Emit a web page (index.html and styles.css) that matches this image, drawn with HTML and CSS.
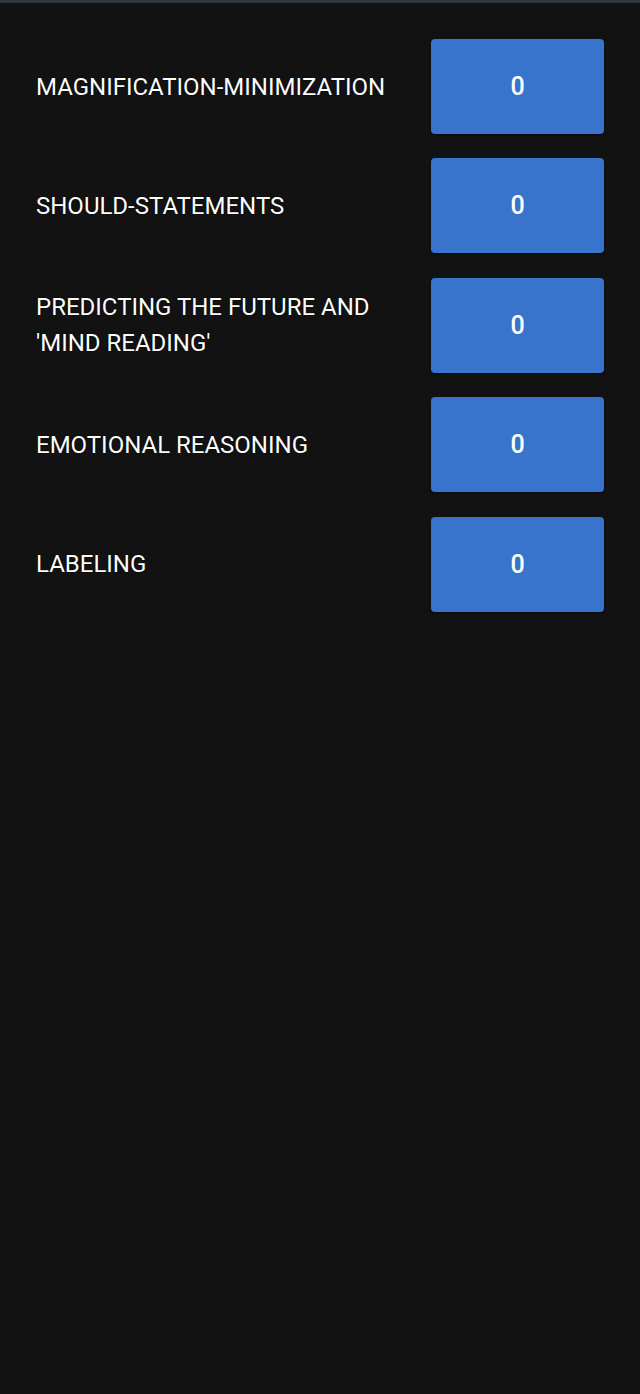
FILE: index.html
```html
<!DOCTYPE html>
<html>
<head>
<meta charset="utf-8">
<link rel="stylesheet" href="styles.css">
</head>
<body>
<div class="topbar"></div>
<main class="list">
  <div class="row">
    <div class="label">MAGNIFICATION-MINIMIZATION</div>
    <button class="count">0</button>
  </div>
  <div class="row">
    <div class="label">SHOULD-STATEMENTS</div>
    <button class="count">0</button>
  </div>
  <div class="row">
    <div class="label">PREDICTING THE FUTURE AND 'MIND READING'</div>
    <button class="count">0</button>
  </div>
  <div class="row">
    <div class="label">EMOTIONAL REASONING</div>
    <button class="count">0</button>
  </div>
  <div class="row">
    <div class="label">LABELING</div>
    <button class="count">0</button>
  </div>
</main>
</body>
</html>
```

FILE: styles.css
```css
html, body {
  margin: 0;
  padding: 0;
  background: #121212;
  height: 100%;
}
body {
  font-family: Roboto, "Noto Sans", sans-serif;
  color: #ffffff;
}
.topbar {
  height: 3px;
  background: #2f373f;
}
.list {
  display: flex;
  flex-direction: column;
  gap: 24.4px;
  padding: 36px 36px 0 36px;
}
.row {
  display: flex;
  align-items: center;
  gap: 20px;
}
.label {
  flex: 1;
  font-size: 24px;
  line-height: 36px;
  text-shadow: 0 0 1px #000, 0 0 1px #000;
}
.count {
  width: 173px;
  height: 95px;
  flex: none;
  border: none;
  border-radius: 4px;
  background: #3874cb;
  color: #ffffff;
  font-family: Roboto, "Noto Sans", sans-serif;
  font-size: 25px;
  font-weight: 500;
  box-shadow: 0 1px 2px rgba(0, 0, 0, 0.6);
  padding: 0;
}
```
